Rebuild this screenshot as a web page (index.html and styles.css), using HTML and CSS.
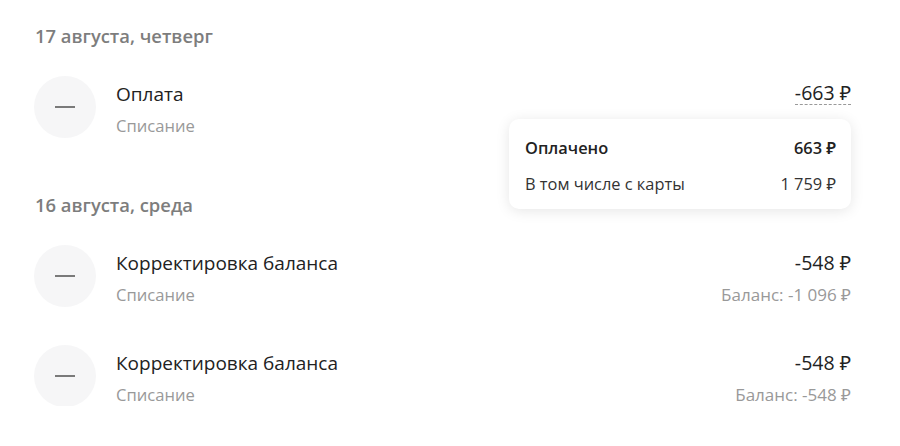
FILE: index.html
```
<!DOCTYPE html>
<html lang="ru">
<head>
    <meta charset="UTF-8">
    <meta name="viewport" content="width=device-width, initial-scale=1.0">
    <title>История операций</title>
    <link rel="stylesheet" href="styles.css">
</head>
<body>
    <div class="history">
        <section class="day">
            <h3 class="day-title">17 августа, четверг</h3>
            <div class="operation">
                <div class="op-icon"><span class="dash"></span></div>
                <div class="op-info">
                    <div class="op-name">Оплата</div>
                    <div class="op-type">Списание</div>
                </div>
                <div class="op-sum">
                    <div class="op-amount dotted">-663 ₽</div>
                    <div class="tooltip">
                        <div class="tip-row bold">
                            <span>Оплачено</span>
                            <span>663 ₽</span>
                        </div>
                        <div class="tip-row">
                            <span>В том числе с карты</span>
                            <span>1 759 ₽</span>
                        </div>
                    </div>
                </div>
            </div>
        </section>

        <section class="day">
            <h3 class="day-title">16 августа, среда</h3>
            <div class="operation">
                <div class="op-icon"><span class="dash"></span></div>
                <div class="op-info">
                    <div class="op-name">Корректировка баланса</div>
                    <div class="op-type">Списание</div>
                </div>
                <div class="op-sum">
                    <div class="op-amount">-548 ₽</div>
                    <div class="op-balance">Баланс: -1 096 ₽</div>
                </div>
            </div>
            <div class="operation">
                <div class="op-icon"><span class="dash"></span></div>
                <div class="op-info">
                    <div class="op-name">Корректировка баланса</div>
                    <div class="op-type">Списание</div>
                </div>
                <div class="op-sum">
                    <div class="op-amount">-548 ₽</div>
                    <div class="op-balance">Баланс: -548 ₽</div>
                </div>
            </div>
        </section>
    </div>
</body>
</html>
```

FILE: styles.css
```
body {
    margin: 0;
    font-family: "Open Sans", "Noto Sans", sans-serif;
    background: #fff;
    color: #222;
}
.history {
    padding: 26px 49px 0 35px;
    display: flex;
    flex-direction: column;
    gap: 58px;
}
.day {
    display: flex;
    flex-direction: column;
    gap: 40px;
}
.day-title {
    margin: 0 0 -9px;
    font-size: 18.4px;
    line-height: 20px;
    font-weight: 600;
    color: #7d7d7d;
}
.operation {
    display: flex;
    align-items: flex-start;
    height: 60px;
}
.op-icon {
    width: 62px;
    height: 62px;
    margin: -1px 0 0 -1px;
    border-radius: 50%;
    background: #f6f6f7;
    display: flex;
    align-items: center;
    justify-content: center;
    flex-shrink: 0;
}
.dash {
    width: 20px;
    height: 2px;
    background: #7a7a7a;
}
.op-info {
    margin-left: 20px;
    flex: 1;
    padding-top: 5px;
}
.op-name, .op-amount {
    font-size: 19px;
    line-height: 24px;
    color: #222;
}
.op-amount {
    font-size: 19.5px;
}
.op-type, .op-balance {
    font-size: 16.6px;
    line-height: 24px;
    margin-top: 8px;
    color: #999;
}
.op-balance {
    font-size: 17px;
}
.op-sum {
    position: relative;
    padding-top: 5px;
    text-align: right;
}
.op-amount.dotted {
    display: inline-block;
    line-height: 22px;
    border-bottom: 1px dashed #999;
}
.tooltip {
    position: absolute;
    top: 42px;
    right: 0;
    width: 342px;
    box-sizing: border-box;
    padding: 17px 15px 0 16px;
    height: 90px;
    background: #fff;
    border-radius: 10px;
    box-shadow: 0 2px 14px rgba(0, 0, 0, 0.1);
    text-align: left;
}
.tip-row {
    display: flex;
    justify-content: space-between;
    font-size: 16.4px;
    line-height: 24px;
    color: #333;
}
.tip-row + .tip-row {
    margin-top: 12px;
}
.tip-row.bold {
    font-weight: 600;
    color: #222;
}
```
